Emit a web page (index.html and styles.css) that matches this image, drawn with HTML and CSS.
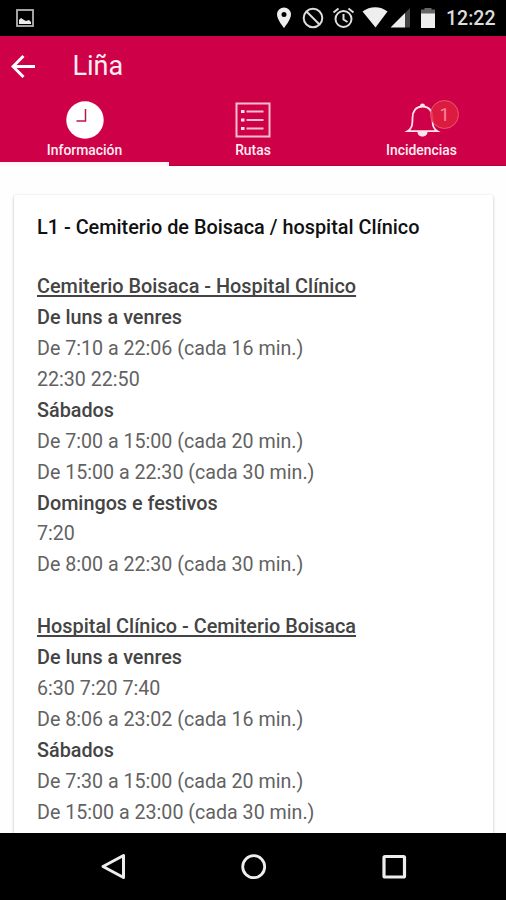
FILE: index.html
```
<!DOCTYPE html>
<html lang="gl">
<head>
<meta charset="utf-8">
<title>Liña</title>
<link rel="stylesheet" href="styles.css">
</head>
<body>
<div class="screen">
  <div class="status">
    <svg class="photo" width="18" height="18" viewBox="0 0 18 18"><rect x="1" y="1" width="16" height="16" fill="none" stroke="#b4b4b4" stroke-width="1.800"/><path d="M3 15v-4l2-2 3 2 2 1 3-1 2 2v2z" fill="#eee"/></svg>
    <svg class="icons" width="165" height="22" viewBox="0 0 165 22">
      <path fill="#eee" fill-rule="evenodd" d="M8 0.500a7 7 0 0 0-7 7c0 5 7 13.500 7 13.500s7-8.500 7-13.500a7 7 0 0 0-7-7zm0 4.500a2.500 2.500 0 1 1 0 5 2.500 2.500 0 0 1 0-5z"/>
      <g fill="none" stroke="#ddd" stroke-width="2"><circle cx="37" cy="11" r="9.300"/><path d="M30.500 4.500l13 13"/>
      <circle cx="67.500" cy="12" r="8"/><path d="M67.500 7v5.500l4 2.500M57.500 5.500l5-4M77.500 5.500l-5-4"/></g>
      <path fill="#eee" d="M86.500 4.500C94-1.200 104.500-1.200 111.500 4.500L99.500 20.500z"/>
      <path fill="#eee" d="M114.500 20.500L129 6v14.500z"/><path fill="#444" d="M129 6l5-5v19.500h-5z"/>
      <path fill="#666" d="M145 2.500h3.500V1h7v1.500h3.500V7h-14z"/><path fill="#eee" d="M145 6.500h14V21h-14z"/>
    </svg>
    <span class="time">12:22</span>
  </div>
  <header class="header">
    <div class="titlebar">
      <svg width="24" height="24" viewBox="0 0 24 24" fill="none" stroke="#fff" stroke-width="3"><path d="M24 12.500H3M12.500 2L2 12.500 12.500 23"/></svg>
      <h1 class="title">Liña</h1>
    </div>
    <nav class="tabs">
      <div class="tab active">
        <svg width="38" height="38" viewBox="0 0 38 38"><circle cx="19" cy="19" r="18.700" fill="#fff"/><path d="M19.500 8v12h-9" fill="none" stroke="#bd1549" stroke-width="1.500"/></svg>
        <span>Información</span>
      </div>
      <div class="tab">
        <svg width="38" height="38" viewBox="0 0 38 38" fill="none" stroke="#f6bfcd" stroke-width="2"><rect x="2.500" y="2.500" width="33" height="33"/><path d="M12.500 10.500h17M12.500 19h17M12.500 27.500h17"/><path stroke="#ffe5eb" stroke-width="3" d="M7 10.500h3.500M7 19h3.500M7 27.500h3.500"/></svg>
        <span>Rutas</span>
      </div>
      <div class="tab">
        <svg width="38" height="38" viewBox="0 0 38 38"><path d="M4.500 30.200c4-2.500 5-5 5-13 0-6.500 3-11.700 10-11.700s10 5.200 10 11.700c0 8 1 10.500 5 13z" fill="none" stroke="#ffe5eb" stroke-width="1.800"/><path d="M17 5a2.500 2.500 0 0 1 5 0zM14.500 31h10c0 6-10 6-10 0z" fill="#ffe5eb"/></svg>
        <b class="badge">1</b>
        <span>Incidencias</span>
      </div>
    </nav>
  </header>
  <main class="content">
    <article class="card">
      <h2>L1 - Cemiterio de Boisaca / hospital Clínico</h2>
      <section>
        <h3>Cemiterio Boisaca - Hospital Clínico</h3>
        <h4>De luns a venres</h4>
        <p>De 7:10 a 22:06 (cada 16 min.)</p>
        <p>22:30 22:50</p>
        <h4>Sábados</h4>
        <p>De 7:00 a 15:00 (cada 20 min.)</p>
        <p>De 15:00 a 22:30 (cada 30 min.)</p>
        <h4>Domingos e festivos</h4>
        <p>7:20</p>
        <p>De 8:00 a 22:30 (cada 30 min.)</p>
      </section>
      <section>
        <h3>Hospital Clínico - Cemiterio Boisaca</h3>
        <h4>De luns a venres</h4>
        <p>6:30 7:20 7:40</p>
        <p>De 8:06 a 23:02 (cada 16 min.)</p>
        <h4>Sábados</h4>
        <p>De 7:30 a 15:00 (cada 20 min.)</p>
        <p>De 15:00 a 23:00 (cada 30 min.)</p>
      </section>
    </article>
  </main>
  <footer class="navbar">
    <svg width="28" height="30" viewBox="0 0 28 30"><path d="M24.500 3.500v22L4 14.500z" fill="none" stroke="#eee" stroke-width="3" stroke-linejoin="round"/></svg>
    <svg width="28" height="30" viewBox="0 0 28 30"><circle cx="14.700" cy="14.700" r="11" fill="none" stroke="#eee" stroke-width="2.800"/></svg>
    <svg width="28" height="30" viewBox="0 0 28 30"><rect x="4" y="4.500" width="20.500" height="20.500" rx="1" fill="none" stroke="#eee" stroke-width="3.200"/></svg>
  </footer>
</div>
</body>
</html>
```
FILE: styles.css
```
* { box-sizing: border-box; }
body { margin: 0; font-family: Roboto, "Liberation Sans", sans-serif; }
svg { display: block; flex: none; }
h1, h2, h3, h4, p { margin: 0; }
.screen { width: 506px; height: 900px; display: flex; flex-direction: column; overflow: hidden; background: #fefefe; }
.status { height: 36px; flex: none; display: flex; align-items: center; background: #000; padding: 0 10px 0 16px; }
.icons { margin-left: auto; }
.time { width: 50px; margin-left: 5px; color: #ddd; font-size: 19.5px; font-weight: 500; line-height: 36px; white-space: nowrap; padding-top: 2px; }
.header { height: 130px; flex: none; background: #ce0047; color: #ffeef2; border-bottom: 1px solid #b8003b; }
.titlebar { height: 60px; display: flex; align-items: center; padding-left: 11px; gap: 37.5px; }
.title { font-size: 27px; font-weight: 400; line-height: 60px; }
.tabs { display: grid; grid-template-columns: 169px 1fr 169px; height: 70px; }
.tab { position: relative; display: flex; flex-direction: column; align-items: center; padding-top: 5px; font-size: 13.9px; line-height: 22px; font-weight: 500; }
.active { border-bottom: 4px solid #fff5f7; }
.badge { position: absolute; left: 93px; top: 4px; width: 29px; height: 29px; border-radius: 50%; border: 1px solid #e65877; background: rgba(223, 32, 64, .85); color: #f18a9d; text-align: center; font-size: 18px; line-height: 28px; font-weight: 400; }
.content { flex: 1; min-height: 0; overflow: hidden; padding: 29px 13px 0 14px; }
.card { height: 700px; background: #fff; border-radius: 2px; box-shadow: 0 1px 3px rgba(0, 0, 0, .28); padding: 18px 23px; font-size: 19.65px; line-height: 30.94px; color: #626262; }
h2 { font-size: 19.87px; font-weight: 500; color: #111; margin-bottom: 28px; white-space: nowrap; }
h3, h4 { font-size: 19.8px; font-weight: 500; color: #444; white-space: nowrap; }
h3 { font-size: 19.87px; text-decoration: underline; text-decoration-thickness: 1.5px; text-underline-offset: 2px; text-decoration-skip-ink: none; }
section + section { margin-top: 30.94px; }
.navbar { height: 67px; flex: none; background: #000; display: flex; justify-content: center; align-items: center; gap: 112.5px; }
```
